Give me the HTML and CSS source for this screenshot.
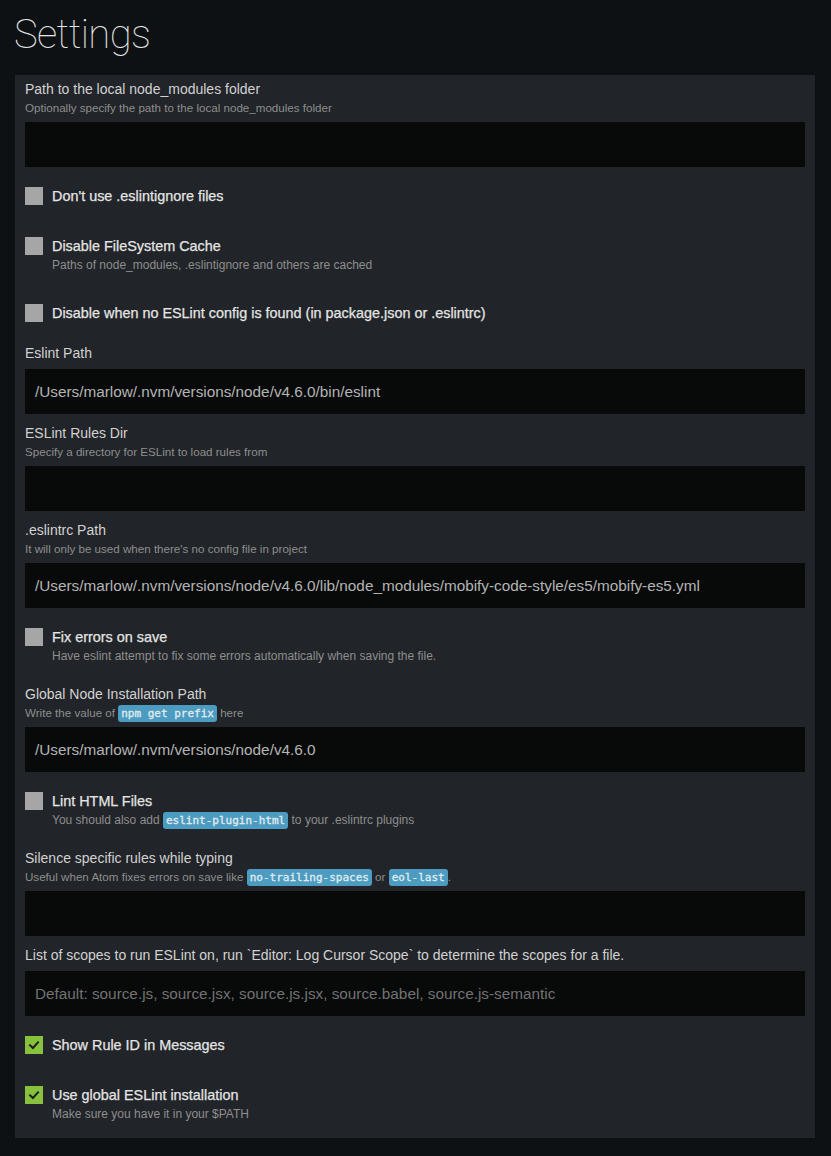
FILE: index.html
```html
<!DOCTYPE html>
<html>
<head>
<meta charset="utf-8">
<link rel="stylesheet" href="styles.css">
</head>
<body>
<h1 class="title">Settings</h1>
<div class="panel">
  <div class="field">
    <div class="label">Path to the local node_modules folder</div>
    <div class="desc">Optionally specify the path to the local node_modules folder</div>
    <div class="input"></div>
  </div>
  <div class="check">
    <span class="box"></span>
    <div class="check-text"><div class="check-label">Don't use .eslintignore files</div></div>
  </div>
  <div class="check">
    <span class="box"></span>
    <div class="check-text">
      <div class="check-label">Disable FileSystem Cache</div>
      <div class="check-desc">Paths of node_modules, .eslintignore and others are cached</div>
    </div>
  </div>
  <div class="check">
    <span class="box"></span>
    <div class="check-text"><div class="check-label">Disable when no ESLint config is found (in package.json or .eslintrc)</div></div>
  </div>
  <div class="field">
    <div class="label">Eslint Path</div>
    <div class="input">/Users/marlow/.nvm/versions/node/v4.6.0/bin/eslint</div>
  </div>
  <div class="field">
    <div class="label">ESLint Rules Dir</div>
    <div class="desc">Specify a directory for ESLint to load rules from</div>
    <div class="input"></div>
  </div>
  <div class="field">
    <div class="label">.eslintrc Path</div>
    <div class="desc">It will only be used when there's no config file in project</div>
    <div class="input">/Users/marlow/.nvm/versions/node/v4.6.0/lib/node_modules/mobify-code-style/es5/mobify-es5.yml</div>
  </div>
  <div class="check">
    <span class="box"></span>
    <div class="check-text">
      <div class="check-label">Fix errors on save</div>
      <div class="check-desc">Have eslint attempt to fix some errors automatically when saving the file.</div>
    </div>
  </div>
  <div class="field">
    <div class="label">Global Node Installation Path</div>
    <div class="desc">Write the value of <code class="code">npm get prefix</code> here</div>
    <div class="input">/Users/marlow/.nvm/versions/node/v4.6.0</div>
  </div>
  <div class="check">
    <span class="box"></span>
    <div class="check-text">
      <div class="check-label">Lint HTML Files</div>
      <div class="check-desc">You should also add <code class="code">eslint-plugin-html</code> to your .eslintrc plugins</div>
    </div>
  </div>
  <div class="field">
    <div class="label">Silence specific rules while typing</div>
    <div class="desc">Useful when Atom fixes errors on save like <code class="code">no-trailing-spaces</code> or <code class="code">eol-last</code>.</div>
    <div class="input"></div>
  </div>
  <div class="field">
    <div class="label">List of scopes to run ESLint on, run `Editor: Log Cursor Scope` to determine the scopes for a file.</div>
    <div class="input placeholder">Default: source.js, source.jsx, source.js.jsx, source.babel, source.js-semantic</div>
  </div>
  <div class="check">
    <span class="box checked"><svg width="18" height="18" viewBox="0 0 18 18"><path d="M5 9.3 L7.9 12 L13 6.3" fill="none" stroke="#1c1f1c" stroke-width="2" stroke-linecap="square"/></svg></span>
    <div class="check-text"><div class="check-label">Show Rule ID in Messages</div></div>
  </div>
  <div class="check">
    <span class="box checked"><svg width="18" height="18" viewBox="0 0 18 18"><path d="M5 9.3 L7.9 12 L13 6.3" fill="none" stroke="#1c1f1c" stroke-width="2" stroke-linecap="square"/></svg></span>
    <div class="check-text">
      <div class="check-label">Use global ESLint installation</div>
      <div class="check-desc">Make sure you have it in your $PATH</div>
    </div>
  </div>
</div>
</body>
</html>
```
FILE: styles.css
```css
html, body {
  margin: 0;
  padding: 0;
  background: #0e1113;
}
body {
  font-family: "Liberation Sans", Arial, sans-serif;
  color: #cfcfcf;
  height: 1156px;
}
.title {
  margin: 0;
  padding: 10px 0 0 14px;
  height: 75px;
  box-sizing: border-box;
  font-family: Roboto, "Liberation Sans", sans-serif;
  font-weight: 100;
  font-size: 40px;
  line-height: 50px;
  color: #e6e6e6;
  letter-spacing: -0.6px;
}
.panel {
  margin-left: 15px;
  width: 800px;
  box-sizing: border-box;
  background: #212428;
  padding: 5px 10px 17px;
}
.label {
  font-size: 14px;
  line-height: 18px;
  color: #d2d2d2;
  white-space: nowrap;
}
.desc {
  margin-top: 2px;
  font-size: 11.6px;
  line-height: 15px;
  color: #8e8e8e;
  white-space: nowrap;
}
.input {
  margin-top: 7px;
  height: 45px;
  background: #080a0a;
  padding-left: 10px;
  font-size: 15.3px;
  line-height: 45px;
  color: #b4b4b4;
  white-space: nowrap;
  overflow: hidden;
}
.input.placeholder {
  color: #727272;
}
.field + .field { margin-top: 10px; }
.check + .check { margin-top: 32px; }
.check + .field { margin-top: 22px; }
.field + .check { margin-top: 20px; }
.check {
  display: flex;
  align-items: flex-start;
  gap: 9px;
}
.box {
  flex: none;
  width: 18px;
  height: 18px;
  background: #a6a6a6;
  display: block;
}
.box.checked {
  background: #87c13e;
}
.box svg { display: block; }
.check-label {
  font-size: 14.4px;
  line-height: 18px;
  color: #e4e4e4;
  -webkit-text-stroke: 0.25px #e4e4e4;
  white-space: nowrap;
}
.check-desc {
  margin-top: 3px;
  font-size: 12px;
  line-height: 14px;
  color: #8e8e8e;
  white-space: nowrap;
}
.code {
  font-family: "DejaVu Sans Mono", "Liberation Mono", monospace;
  font-size: 11px;
  line-height: 10px;
  background: #4b9cc0;
  color: #e2ebf0;
  -webkit-text-stroke: 0.3px #e2ebf0;
  padding: 2px 3px;
  border-radius: 3px;
}
```
